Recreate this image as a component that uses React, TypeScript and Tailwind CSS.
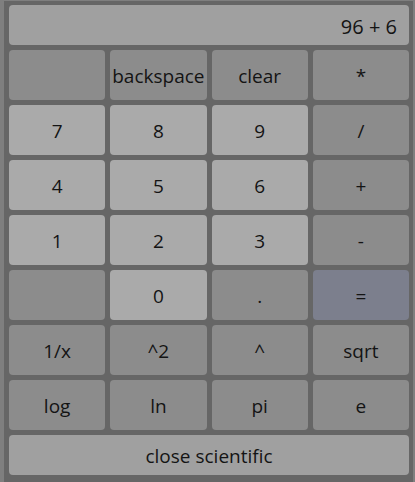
import React from 'react';

type Key = {
  label: string;
  tone: 'dark' | 'light' | 'accent';
};

// calculator keypad, row by row
const keys: Key[] = [
  { label: '', tone: 'dark' },
  { label: 'backspace', tone: 'dark' },
  { label: 'clear', tone: 'dark' },
  { label: '*', tone: 'dark' },
  { label: '7', tone: 'light' },
  { label: '8', tone: 'light' },
  { label: '9', tone: 'light' },
  { label: '/', tone: 'dark' },
  { label: '4', tone: 'light' },
  { label: '5', tone: 'light' },
  { label: '6', tone: 'light' },
  { label: '+', tone: 'dark' },
  { label: '1', tone: 'light' },
  { label: '2', tone: 'light' },
  { label: '3', tone: 'light' },
  { label: '-', tone: 'dark' },
  { label: '', tone: 'dark' },
  { label: '0', tone: 'light' },
  { label: '.', tone: 'dark' },
  { label: '=', tone: 'accent' },
  { label: '1/x', tone: 'dark' },
  { label: '^2', tone: 'dark' },
  { label: '^', tone: 'dark' },
  { label: 'sqrt', tone: 'dark' },
  { label: 'log', tone: 'dark' },
  { label: 'ln', tone: 'dark' },
  { label: 'pi', tone: 'dark' },
  { label: 'e', tone: 'dark' },
];

const toneClass = {
  dark: 'bg-[#8c8c8c]',
  light: 'bg-[#aaaaaa]',
  accent: 'bg-[#7c7f8d]',
};

export default function App() {
  return (
    <div
      className="min-h-screen bg-[#7f7f7f] pl-[4px] pr-[2px] pt-[1px]"
      style={{ fontFamily: '"Open Sans", "Noto Sans", sans-serif' }}
    >
      <div className="bg-[#666666] pl-[5px] pr-[4px] pt-[4px] pb-[7px] text-[#141414]">
        <div className="h-[40px] rounded-[4px] bg-[#a0a0a0] flex items-center justify-end pr-[12px] pt-[3px] text-[20px]">
          96 + 6
        </div>
        <div className="grid grid-cols-4 gap-[5px] mt-[5px]">
          {keys.map((k, i) => (
            <button
              key={i}
              className={`h-[50px] rounded-[4px] flex items-center justify-center pt-[3px] text-[19px] ${toneClass[k.tone]}`}
            >
              {k.label}
            </button>
          ))}
        </div>
        <button className="mt-[5px] w-full h-[40px] rounded-[4px] bg-[#a0a0a0] flex items-center justify-center pt-[2px] text-[19px]">
          close scientific
        </button>
      </div>
    </div>
  );
}
